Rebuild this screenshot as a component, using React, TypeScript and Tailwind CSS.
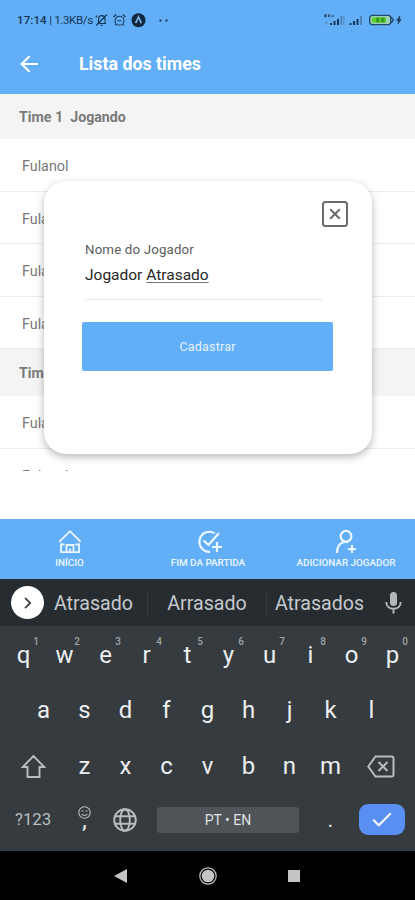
import { useState } from 'react';

const TOP_KEYS = ['q', 'w', 'e', 'r', 't', 'y', 'u', 'i', 'o', 'p'];
const HOME_KEYS = ['a', 's', 'd', 'f', 'g', 'h', 'j', 'k', 'l'];
const LOW_KEYS = ['z', 'x', 'c', 'v', 'b', 'n', 'm'];

const StatusBar = () => (
  <div className="flex h-10 items-center pl-[17px] pr-[12px] text-[#173654]">
    <span className="w-[78px] whitespace-nowrap pt-[1px] text-[11.5px] leading-none tracking-[-0.35px]">
      <span className="font-medium tracking-[0.1px]">17:14</span> | 1.3KB/s
    </span>
    {/* Silent, alarm, expo */}
    <svg width="74" height="16" viewBox="0 0 74 16" fill="none" stroke="currentColor" strokeWidth="1.1">
      <path d="M2.5 11.5h8.5M3.5 11V7.2C3.5 4.8 4.8 3.6 6.7 3.6S10 4.8 10 7.2V11M5.6 13.2h2.2M1.2 13.5 12 2.5M.8 5.5 2 3.6" />
      <circle cx="24.5" cy="8.7" r="4.5" />
      <path d="m18.6 5 2.6-2.5M30.4 5l-2.6-2.5M22.5 8.8h4M21 12.3l-1 1.2M28 12.3l1 1.2" />
      <circle cx="43.5" cy="8.2" r="7" fill="#10283f" stroke="none" />
      <path d="m40.6 11.2 2.9-6.2 2.9 6.2" stroke="#78b3e6" strokeWidth="1.7" />
      <path d="M64.5 7.5h2v2h-2zM70.5 7.5h2v2h-2z" fill="currentColor" stroke="none" />
    </svg>
    {/* Signals and battery */}
    <svg className="ml-auto" width="79" height="14" viewBox="0 0 79 14">
      <path d="M0 1.2h3v3H0zM4 1.2h2v3H4zM7 2.2h3v1.6H7z" fill="#365d82" />
      <path d="m0 12 3-4 1.5 1-3 3z" fill="#5f93c2" />
      <path d="M6 10h2v2H6zM9.5 8h2v4h-2zM13 6h2v6h-2zM25.5 10h2v2h-2zM29 8h2v4h-2zM32.5 6h2v6h-2z" fill="#173654" />
      <path d="M16.3 3h2v9h-2zM36 3h2v9h-2zM19.4 2h1v10h-1z" fill="#4e86b8" />
      <rect x="45.7" y="2.4" width="21" height="9.2" rx="2.5" fill="#9bd3b4" stroke="#24486b" strokeWidth="1.3" />
      <path d="M48 4.5h14v5H48z" fill="#5dcf2a" />
      <path d="M52 4.5h3.5v5H52zM57 4.5h3.5v5H57z" fill="#3d9d27" />
      <path d="m67 4 2.5 3L67 10" fill="none" stroke="#24486b" strokeWidth="1.2" />
      <path d="m75.8 3-3 4.5h2L74 11l3.2-4.8h-2z" fill="#173654" stroke="#173654" strokeWidth=".6" />
    </svg>
  </div>
);

const Header = () => (
  <header className="flex h-[54px] items-center pb-[7px] pl-[20px] text-white">
    <svg width="18" height="18" viewBox="0 0 18 18" fill="none" stroke="currentColor" strokeWidth="2.2">
      <path d="M18 9H2M9.5 1.2 1.7 9l7.8 7.8" />
    </svg>
    <h1 className="ml-[41px] text-[17.8px] font-bold leading-none">Lista dos times</h1>
  </header>
);

const PlayerRow = ({ name }: { name: string }) => (
  <li className="flex h-[52.6px] shrink-0 items-center border-b border-[#ececec] pl-[22px] pt-[4px] text-[14.3px] text-[#777]">
    {name}
  </li>
);

const TeamTitle = ({ title }: { title: string }) => (
  <h2 className="flex h-full items-center whitespace-pre pl-[19px] pt-[2px] text-[14.2px] font-bold text-[#7a7a7a]">{title}</h2>
);

const PlayerModal = () => {
  const [name, setName] = useState('Jogador Atrasado');
  const [first, ...rest] = name.split(' ');

  return (
    <div className="absolute left-[44px] top-[181px] flex h-[273px] w-[328px] flex-col rounded-[22px] bg-white pl-[38px] pr-[39px] shadow-[0_3px_9px_rgba(0,0,0,0.28)]">
      <button className="-mr-[15px] mt-[20px] self-end text-[#6b6b6b]" onClick={() => setName('')}>
        <svg width="26" height="26" viewBox="0 0 26 26" fill="none" stroke="currentColor" strokeWidth="2">
          <rect x="1" y="1" width="24" height="24" rx="2.5" />
          <path d="m8.2 8.2 9.6 9.6M17.8 8.2l-9.6 9.6" />
        </svg>
      </button>
      <label className="ml-[3px] mt-[15px] text-[13.3px] leading-[16px] tracking-[0.15px] text-[#5c5c5c]">Nome do Jogador</label>
      <div className="ml-[3px] mr-[11px] h-[42px] border-b border-[#e6e6e6] pt-[7px] text-[15.5px] leading-[20px] text-[#262626]">
        {first} <span className="underline decoration-[#777] underline-offset-2">{rest.join(' ')}</span>
      </div>
      <button className="mt-[22px] h-[49px] rounded-[2px] bg-[#62aff7] pt-[2px] text-[12.5px] tracking-[0.2px] text-[#e6f3ff]">
        Cadastrar
      </button>
    </div>
  );
};

const BottomTabs = () => (
  <nav className="grid h-[60px] grid-cols-[139px_138px_138px] bg-[#62aff7] text-[9.9px] font-medium leading-none text-[#edf7ff]">
    <div className="flex flex-col items-center pt-[10px]">
      <svg width="26" height="26" viewBox="0 0 26 26" fill="none" stroke="currentColor" strokeWidth="1.8">
        <path d="M2.3 12.8 13 2.2l10.7 10.6M4 14.2v9h18v-9M9.500 23v-7h7v7M4 15.500h3.500M18.500 15.500H22M13 23v-3.500" />
      </svg>
      <span className="mt-[3px]">INÍCIO</span>
    </div>
    <div className="flex flex-col items-center pt-[10px]">
      <svg className="ml-[2px]" width="26" height="26" viewBox="0 0 26 26" fill="none" stroke="currentColor" strokeWidth="2.2">
        <path d="M18.5 4.2A10 10 0 1 0 14 22.8M7.5 11.5l5 4.5L23 4M21 13v10M16 18h10" />
      </svg>
      <span className="mt-[3px]">FIM DA PARTIDA</span>
    </div>
    <div className="flex flex-col items-center pt-[10px]">
      <svg width="26" height="26" viewBox="0 0 26 26" fill="none" stroke="currentColor" strokeWidth="2.2">
        <circle cx="13" cy="7.3" r="5.4" />
        <path d="M4 24c0-6 3-10 7-11h4M19 16v8M15 20h8" />
      </svg>
      <span className="mt-[3px] whitespace-nowrap">ADICIONAR JOGADOR</span>
    </div>
  </nav>
);

const Suggestions = () => (
  <div className="flex h-[47px] items-center bg-[#262c30] pl-[11px] text-[19.6px] text-[#c5c9cc]">
    <div className="flex h-[33px] w-[33px] items-center justify-center rounded-full bg-white text-[#444]">
      <svg width="8" height="12" viewBox="0 0 8 12" fill="none" stroke="currentColor" strokeWidth="1.8">
        <path d="m1 .8 5.2 5.2L1 11.2" />
      </svg>
    </div>
    <span className="w-[103px] pl-[10px] pt-[3px]">Atrasado</span>
    <span className="h-6 w-px bg-[#363d41]" />
    <span className="w-[118px] pt-[3px] text-center">Arrasado</span>
    <span className="h-6 w-px bg-[#363d41]" />
    <span className="pl-[8px] pt-[3px]">Atrasados</span>
    <svg className="ml-auto mr-[13px]" width="17" height="22" viewBox="0 0 17 22">
      <rect x="5" y="0" width="7" height="14" rx="3.5" fill="#b4b8bb" />
      <path d="M1.3 10c0 4.5 3.3 6.8 7.2 6.8s7.2-2.3 7.2-6.8M8.5 17v4.5" fill="none" stroke="#b4b8bb" strokeWidth="2" />
    </svg>
  </div>
);

const Key = ({ label, hint }: { label: string; hint?: string }) => (
  <div className="relative flex h-[55px] w-[41px] items-center justify-center pt-[2px] text-[24px] leading-none">
    {label}
    {hint && <span className="absolute right-[5px] top-[11px] text-[10px] font-medium leading-none text-[#9ea3a6]">{hint}</span>}
  </div>
);

const Keyboard = () => (
  <div className="h-[225px] bg-[#353b3e] text-[#eceeef]">
    <div className="flex pl-[3px]">
      {TOP_KEYS.map((k, i) => <Key key={k} label={k} hint={String((i + 1) % 10)} />)}
    </div>
    <div className="flex pl-[23px]">
      {HOME_KEYS.map((k) => <Key key={k} label={k} />)}
    </div>
    <div className="flex items-center pl-[21px] pt-[1px]">
      <svg className="mt-[3px]" width="25" height="25" viewBox="0 0 25 25" fill="none" stroke="#b9bdbf" strokeWidth="1.9">
        <path d="M12.5 2 1.8 13h4.7v10h12V13h4.7z" />
      </svg>
      <div className="ml-[18px] flex">
        {LOW_KEYS.map((k) => <Key key={k} label={k} />)}
      </div>
      <svg className="ml-[16px] mt-[4px]" width="28" height="23" viewBox="0 0 28 23" fill="none" stroke="#b9bdbf" strokeWidth="2">
        <path d="M8.5 1.5H25a1.5 1.5 0 0 1 1.5 1.5v17a1.5 1.5 0 0 1-1.5 1.5H8.5L1.3 11.5zM11.5 7l9 9M20.5 7l-9 9" />
      </svg>
    </div>
    <div className="flex h-[55px] items-center text-[#b9bdbf]">
      <span className="ml-[15px] w-[63px] pt-[1px] text-[16.8px]">?123</span>
      <div className="flex w-[13px] flex-col items-center pb-[3px]">
        <svg width="13" height="13" viewBox="0 0 13 13" fill="none" stroke="currentColor" strokeWidth="1.1">
          <circle cx="6.5" cy="6.5" r="5.7" />
          <path d="M3.5 5h2M7.5 5h2M3.7 8.2c1.4 1.7 4.2 1.7 5.6 0" />
        </svg>
        <span className="h-[11px] text-[22px] font-medium leading-[4px] text-[#dfe1e2]">,</span>
      </div>
      <svg className="ml-[22px]" width="24" height="24" viewBox="0 0 24 24" fill="none" stroke="currentColor" strokeWidth="1.9">
        <circle cx="12" cy="12" r="10.8" />
        <ellipse cx="12" cy="12" rx="4.8" ry="10.8" />
        <path d="M2 8.3h20M2 15.7h20" />
      </svg>
      <div className="ml-[20px] flex h-[26px] w-[142px] items-center justify-center rounded-[3px] bg-[#505358] pt-[1px] text-[14px] text-[#dfe1e2]">
        PT • EN
      </div>
      <span className="ml-[27px] w-[9px] text-center text-[22px] leading-none text-[#dfe1e2]">.</span>
      <div className="ml-[24px] flex h-[31px] w-[46px] items-center justify-center rounded-[9px] bg-[#598ff0] text-white">
        <svg width="20" height="15" viewBox="0 0 20 15" fill="none" stroke="currentColor" strokeWidth="2">
          <path d="m1.2 7.8 5.6 5.5L18.8 1.2" />
        </svg>
      </div>
    </div>
  </div>
);

const SystemNav = () => (
  <div className="flex h-[49px] items-center bg-black pl-[114px] text-[#c4c4c4]">
    <svg width="13" height="14" viewBox="0 0 13 14">
      <path d="M13 0v14L0 7z" fill="currentColor" />
    </svg>
    <svg className="ml-[72px]" width="18" height="18" viewBox="0 0 18 18">
      <circle cx="9" cy="9" r="8.2" fill="none" stroke="currentColor" strokeWidth="1.2" />
      <circle cx="9" cy="9" r="6.3" fill="currentColor" />
    </svg>
    <span className="ml-[71px] h-[12px] w-[12px] bg-current" />
  </div>
);

const App = () => (
  <div className="relative flex h-[900px] w-[415px] flex-col overflow-hidden bg-white font-['Roboto',sans-serif]">
    <div className="h-[94px] bg-[#62aff7]">
      <StatusBar />
      <Header />
    </div>
    <main className="flex h-[425px] flex-col">
      <div className="flex h-[377px] flex-col overflow-hidden">
        <div className="h-[45px] shrink-0 bg-[#f4f4f4]"><TeamTitle title="Time 1  Jogando" /></div>
        <ul>
          {[1, 2, 3, 4].map((n) => <PlayerRow key={n} name="Fulanol" />)}
        </ul>
        <div className="h-[47px] shrink-0 bg-[#f4f4f4]"><TeamTitle title="Time 2" /></div>
        <ul>
          <PlayerRow name="Fulanol" />
          <PlayerRow name="Fulanol" />
        </ul>
      </div>
    </main>
    <BottomTabs />
    <Suggestions />
    <Keyboard />
    <SystemNav />
    <PlayerModal />
  </div>
);

export default App;
